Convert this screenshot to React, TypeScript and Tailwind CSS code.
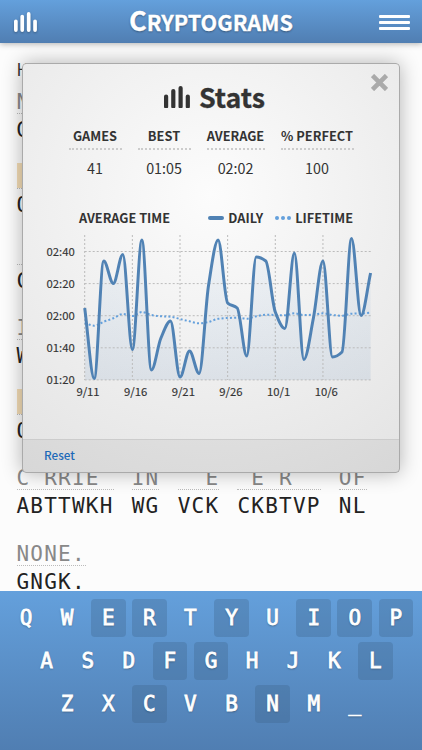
const SANS = "font-['Noto_Sans_CJK_SC',sans-serif]";
const MONO = "font-['DejaVu_Sans_Mono',monospace]";

const DAILY = [
  308, 378.5, 261, 283.5, 254.5, 349.5, 240, 370, 338, 321, 377, 351, 373.5, 285, 240, 303, 308, 356, 257, 261, 312,
  328.5, 253, 359.5, 318, 261, 357, 352, 238.5, 315.5, 273,
];
const LIFETIME = [
  323, 325.7, 321.7, 318.3, 314, 316, 312, 315, 316.3, 316.7, 319, 321.3, 323.3, 322, 318.8, 318, 317.7, 318.7, 316.3,
  314.7, 315, 315.3, 313.3, 315, 314.7, 313.3, 315, 315.7, 313.7, 313.5, 312.7,
];

const X0 = 61.7;
const STEP = 9.53;
const TOP = 227;

// monotone cubic interpolation, same shape as d3's curveMonotoneX
function smooth(values: number[]) {
  const ys = values.map((v) => v - TOP);
  const slopes = ys.slice(1).map((y, i) => (y - ys[i]) / STEP);
  const tangents = ys.map((_, i) => {
    if (i === 0) return slopes[0];
    if (i === ys.length - 1) return slopes[i - 1];
    const a = slopes[i - 1];
    const b = slopes[i];
    if (a * b <= 0) return 0;
    return (2 * a * b) / (a + b);
  });
  let d = `M${X0},${ys[0]}`;
  for (let i = 1; i < ys.length; i++) {
    const x1 = X0 + STEP * (i - 1);
    const x2 = X0 + STEP * i;
    const t = STEP / 3;
    d += `C${x1 + t},${ys[i - 1] + tangents[i - 1] * t} ${x2 - t},${ys[i] - tangents[i] * t} ${x2},${ys[i]}`;
  }
  return d;
}

const BarsIcon = ({ className }: { className: string }) => (
  <svg viewBox="0 0 26 22.5" className={className} fill="none" stroke="currentColor" strokeWidth="4.2" strokeLinecap="round">
    <path d="M2.1 10.5v9.9M9.3 5.1v15.3M16.6 2.1v18.3M23.8 10.5v9.9" />
  </svg>
);

const Header = () => (
  <header className="relative z-10 grid h-[43px] shrink-0 grid-cols-[1fr_auto_1fr] items-center bg-linear-to-b from-[#64a0dc] to-[#507eb2] pr-[12px] pl-[14px] text-white shadow-[0_1px_6px_rgba(0,0,0,0.3)]">
    <BarsIcon className="h-[20px] w-[23px] drop-shadow-[0_1px_1px_rgba(0,0,0,0.3)]" />
    <h1 className="-mt-[2px] mr-[2px] text-[27px] leading-[40px] font-bold [-webkit-text-stroke:0.3px_white] [text-shadow:0_1px_2px_rgba(0,0,0,0.4)]">
      C<span className="text-[21.6px]">RYPTOGRAMS</span>
    </h1>
    <div className="mt-[2px] flex w-[31px] flex-col gap-[3.3px] justify-self-end">
      <i className="h-[3px] rounded-[1px] bg-white" />
      <i className="h-[3px] rounded-[1px] bg-white" />
      <i className="h-[3px] rounded-[1px] bg-white" />
    </div>
  </header>
);

type Word = { plain: string; cipher: string; marked?: boolean };

const LINES: Word[][] = [
  [{ plain: 'N', cipher: 'G' }],
  [{ plain: ' ', cipher: 'O', marked: true }],
  [{ plain: ' ', cipher: 'C' }],
  [{ plain: 'I', cipher: 'W' }],
  [{ plain: ' ', cipher: 'O', marked: true }],
  [
    { plain: 'C RRIE ', cipher: 'ABTTWKH' },
    { plain: 'IN', cipher: 'WG' },
    { plain: '  E', cipher: 'VCK' },
    { plain: ' E R  ', cipher: 'CKBTVP' },
    { plain: 'OF', cipher: 'NL' },
  ],
  [{ plain: 'NONE.', cipher: 'GNGK.' }],
];

const Puzzle = () => (
  <main className="h-[548px] overflow-hidden bg-[#fcfcfc] pl-[16.5px]">
    <p className="h-[43px] pt-[14px] text-[17px] leading-[23px] text-[#333]">H</p>
    <div className={`text-[21px] tracking-[1.22px] ${MONO}`}>
      {LINES.map((line, i) => (
        <div key={i} className="flex h-[75.3px] gap-[18.2px] whitespace-pre">
          {line.map((word) => (
            <div key={word.cipher}>
              <div className={`h-[28px] border-b border-dotted border-[#bbb] leading-[32px] text-[#888] ${word.marked ? 'bg-[#f3dcb5] bg-[linear-gradient(#fcfcfc_2px,transparent_2px)]' : ''}`}>
                {word.plain}
              </div>
              <div className="h-[30px] leading-[33px] text-[#222]">{word.cipher}</div>
            </div>
          ))}
        </div>
      ))}
    </div>
  </main>
);

const ROWS = ['QWERTYUIOP', 'ASDFGHJKL', 'ZXCVBNM_'];
const USED = 'ERYIOPFGLCN';

const Keyboard = () => (
  <footer className={`flex h-[159px] shrink-0 flex-col items-center gap-[4.5px] bg-linear-to-b from-[#64a0dc] to-[#507eb2] pt-[7.5px] text-[21px] text-white ${MONO}`}>
    {ROWS.map((row) => (
      <div key={row} className="flex gap-[6.3px]">
        {row.split('').map((key) => (
          <span
            key={key}
            className={`h-[38.5px] w-[34.8px] rounded-[4px] text-center leading-[39px] [-webkit-text-stroke:0.8px_white] [text-shadow:0_1px_2px_rgba(0,0,0,0.4)] ${USED.includes(key) ? 'bg-[#3c5f84]/30' : ''}`}
          >
            {key}
          </span>
        ))}
      </div>
    ))}
  </footer>
);

const STATS = [
  { label: 'GAMES', value: '41', width: 'w-[53px]' },
  { label: 'BEST', value: '01:05', width: 'w-[53px]' },
  { label: 'AVERAGE', value: '02:02', width: 'w-[58px]' },
  { label: '% PERFECT', value: '100', width: 'w-[73px]' },
];

const Chart = () => (
  <svg width="376" height="180" viewBox="0 0 376 180" className="-mt-px block">
    <defs>
      <linearGradient id="area" x1="0" y1="0" x2="0" y2="1">
        <stop offset="0" stopColor="#64a0dc" stopOpacity="0.05" />
        <stop offset="1" stopColor="#507eb2" stopOpacity="0.12" />
      </linearGradient>
    </defs>
    <path d={`${smooth(DAILY)}V153H${X0}Z`} fill="url(#area)" />
    <g stroke="#bbb" strokeWidth="1" strokeDasharray="2 2">
      {[0, 1, 2, 3, 4, 5].map((i) => (
        <path key={i} d={`M${X0 + i * STEP * 5},8V153`} />
      ))}
      {[0, 1, 2, 3, 4].map((i) => (
        <path key={i} d={`M${X0},${24.5 + i * 32.1}H348`} />
      ))}
    </g>
    <path d={smooth(LIFETIME)} fill="none" stroke="#64a0dc" strokeWidth="2" strokeDasharray="2 2.2" />
    <path d={smooth(DAILY)} fill="none" stroke="#5082b4" strokeWidth="3" />
    <g fontSize="11.3" fill="#333" stroke="#333" strokeWidth="0.15">
      {['02:40', '02:20', '02:00', '01:40', '01:20'].map((t, i) => (
        <text key={t} x="51.8" y={29 + i * 32.1} textAnchor="end">{t}</text>
      ))}
      {['9/11', '9/16', '9/21', '9/26', '10/1', '10/6'].map((t, i) => (
        <text key={t} x={X0 + 3.3 + i * STEP * 5} y="168.5" textAnchor="middle">{t}</text>
      ))}
    </g>
  </svg>
);

const StatsDialog = () => (
  <section className="absolute top-[63px] left-[22px] z-20 flex h-[410px] w-[378px] flex-col rounded-[4px] border border-[#aaa] bg-[radial-gradient(circle_at_50%_32%,#fcfcfc,#e3e3e3)] text-[#333] shadow-[0_0_20px_rgba(0,0,0,0.3)]">
    <button className="absolute top-[10px] right-[11px] text-[#aaa]" aria-label="Close">
      <svg width="17" height="17" viewBox="0 0 17 17" stroke="currentColor" strokeWidth="4.6">
        <path d="M1.5 1.5l14 14M15.5 1.5l-14 14" />
      </svg>
    </button>
    <div className="flex h-[60px] items-center justify-center gap-[9px] pt-[6px] pl-[7px]">
      <BarsIcon className="h-[22.5px] w-[26px]" />
      <h2 className="text-[26.8px] leading-[36px] font-bold [-webkit-text-stroke:0.3px_#333]">Stats</h2>
    </div>
    <dl className="flex justify-center gap-[16px] text-center">
      {STATS.map((s) => (
        <div key={s.label} className={s.width}>
          <dt className="flex h-[26px] justify-center border-b-2 border-dotted border-[#ccc] text-[12.8px] leading-[24px] font-bold whitespace-nowrap">{s.label}</dt>
          <dd className="text-[14.3px] leading-[35px]">{s.value}</dd>
        </div>
      ))}
    </dl>
    <div className="mt-[23px] flex h-[20px] items-center pr-[46px] pl-[56px] text-[12.75px] leading-[20px] font-bold">
      <span>AVERAGE TIME</span>
      <i className="mr-[4px] ml-auto h-[4px] w-[16px] rounded-full bg-[#5082b4]" />
      <span>DAILY</span>
      <i className="ml-[12px] flex gap-[2px]">
        <b className="size-[4px] rounded-full bg-[#64a0dc]" />
        <b className="size-[4px] rounded-full bg-[#64a0dc]" />
        <b className="size-[4px] rounded-full bg-[#64a0dc]" />
      </i>
      <span className="ml-[4px]">LIFETIME</span>
    </div>
    <Chart />
    <div className="mt-auto h-[33px] border-t border-[#ccc] bg-black/5 pl-[21px] text-[11.7px] leading-[30px] font-medium text-[#1c69b8]">Reset</div>
  </section>
);

export default function App() {
  return (
    <div className={`relative flex h-[750px] w-[422px] flex-col overflow-hidden ${SANS}`}>
      <Header />
      <Puzzle />
      <Keyboard />
      <StatsDialog />
    </div>
  );
}
